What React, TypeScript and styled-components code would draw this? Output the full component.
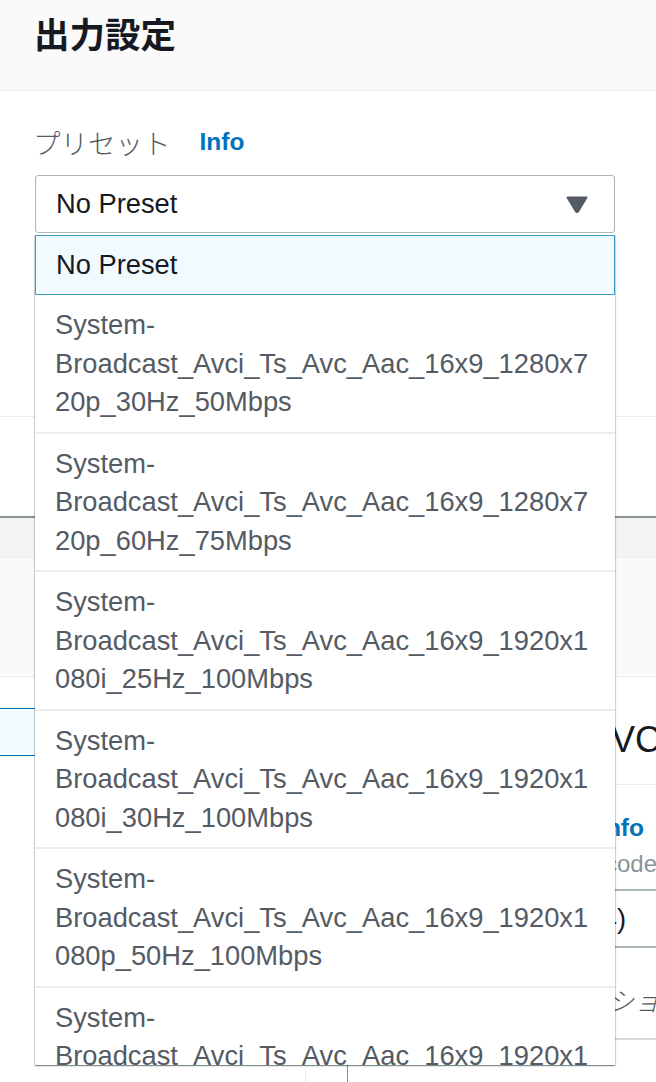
import React from "react";
import styled, { createGlobalStyle } from "styled-components";

const LATIN = `"Liberation Sans", Arial, "Noto Sans CJK JP", sans-serif`;
const CJK = `"Noto Sans CJK JP", sans-serif`;

const Global = createGlobalStyle`
  html, body { margin: 0; padding: 0; background: #fff; }
  body { font-family: ${LATIN}; }
`;

const Page = styled.div`
  position: relative;
  width: 656px;
  height: 1082px;
  overflow: hidden;
  background: #fff;
`;

const Header = styled.header`
  height: 91px;
  box-sizing: border-box;
  background: #fafafa;
  border-bottom: 1px solid #eaeded;
  padding: 12px 35px 0 34px;
`;

const Title = styled.h1`
  margin: 0;
  font: 700 35.5px/42px ${CJK};
  color: #16191f;
`;

const FormSection = styled.section`
  height: 326px;
  box-sizing: border-box;
  border-bottom: 1px solid #eaeded;
  padding: 36px 41px 0 35px;
`;

const LabelRow = styled.div`
  display: flex;
  align-items: center;
  gap: 29px;
  height: 30px;
  margin-bottom: 18px;
`;

const Label = styled.span`
  margin-left: -2px;
  font: 300 27.5px/30px ${CJK};
  color: #545b64;
`;

const InfoLink = styled.a`
  font: 700 24.5px/30px ${LATIN};
  color: #0073bb;
  text-decoration: none;
`;

const SelectWrap = styled.div`
  position: relative;
`;

const SelectBox = styled.div`
  height: 58px;
  box-sizing: border-box;
  border: 1px solid #aab7b8;
  border-radius: 3px;
  display: flex;
  align-items: center;
  justify-content: space-between;
  padding: 0 26px 0 20px;
  font: 400 27.3px/38px ${LATIN};
  color: #16191f;
`;

const Caret = styled.svg`
  width: 22px;
  height: 17px;
  display: block;
`;

const Menu = styled.ul`
  position: absolute;
  top: 60px;
  left: 0;
  right: 0;
  height: 830px;
  margin: 0;
  padding: 0;
  list-style: none;
  overflow: hidden;
  background: #fff;
  box-shadow: 0 1px 1px 0 rgba(0, 28, 36, 0.3), 1px 1px 1px 0 rgba(0, 28, 36, 0.15),
    -1px 1px 1px 0 rgba(0, 28, 36, 0.15);
  z-index: 5;
`;

const Option = styled.li<{ $selected?: boolean }>`
  box-sizing: border-box;
  padding: ${(p) => (p.$selected ? "10px 20px" : "11px 20px 10px")};
  border: ${(p) => (p.$selected ? "1px solid #3f9bcb" : "none")};
  border-bottom: ${(p) => (p.$selected ? "1px solid #3f9bcb" : "2px solid #eaeded")};
  background: ${(p) => (p.$selected ? "#f1faff" : "#fff")};
  font: 400 27.3px/${(p) => (p.$selected ? "38px" : "38.5px")} ${LATIN};
  color: ${(p) => (p.$selected ? "#16191f" : "#545b64")};
  overflow-wrap: anywhere;
`;

const Spacer = styled.div<{ $h: number }>`
  height: ${(p) => p.$h}px;
`;

const TableBar = styled.div`
  height: 42px;
  box-sizing: border-box;
  border-top: 2px solid #879596;
  border-bottom: 1px solid #eaeded;
  background: #f2f3f3;
`;

const FilterArea = styled.div`
  height: 119px;
  box-sizing: border-box;
  background: #fafafa;
  border-bottom: 1px solid #eaeded;
`;

const Columns = styled.div`
  display: grid;
  grid-template-columns: 306px 1fr;
  height: 406px;
`;

const NavCol = styled.nav`
  border-right: 1px solid #eaeded;
  padding-top: 31px;
`;

const NavItem = styled.div<{ $active?: boolean }>`
  height: 48px;
  box-sizing: border-box;
  border-top: 1px solid ${(p) => (p.$active ? "#0073bb" : "transparent")};
  border-bottom: 1px solid ${(p) => (p.$active ? "#0073bb" : "transparent")};
  background: ${(p) => (p.$active ? "#f1faff" : "transparent")};
`;

const ContentCol = styled.div`
  display: flex;
  flex-direction: column;
  align-items: stretch;
  overflow: hidden;
`;

const Heading = styled.div`
  height: 108px;
  box-sizing: border-box;
  border-bottom: 1px solid #eaeded;
  display: flex;
  align-items: center;
  justify-content: flex-end;
  padding-top: 18px;
  margin-right: -5px;
  font: 400 36px/44px ${LATIN};
  color: #16191f;
  white-space: nowrap;
`;

const FieldLabelRow = styled.div`
  display: flex;
  justify-content: flex-end;
  align-items: center;
  gap: 12px;
  margin-top: 28px;
  padding-right: 12px;
  height: 30px;
  white-space: nowrap;
`;

const FieldLabel = styled.span`
  font: 400 24px/30px ${CJK};
  color: #16191f;
`;

const Desc = styled.div`
  display: flex;
  justify-content: flex-end;
  margin-top: 4px;
  margin-right: -13px;
  font: 400 24px/34px ${LATIN};
  color: #879596;
  white-space: nowrap;
`;

const Input = styled.div`
  margin-top: 8px;
  margin-right: -10px;
  height: 59px;
  box-sizing: border-box;
  border-top: 2px solid #aab7b8;
  border-bottom: 2px solid #aab7b8;
  display: flex;
  justify-content: flex-end;
  align-items: center;
  padding-right: 40px;
  font: 400 27.3px/38px ${LATIN};
  color: #16191f;
  white-space: nowrap;
`;

const OptionalRow = styled.div`
  height: 92px;
  box-sizing: border-box;
  border-bottom: 2px solid #d5dbdb;
  display: flex;
  justify-content: flex-end;
  align-items: center;
  padding-top: 14px;
  margin-right: -30px;
  font: italic 300 26px/34px ${CJK};
  color: #545b64;
  white-space: nowrap;
`;

const SubPanel = styled.div`
  margin-top: 10px;
  margin-left: 41px;
  flex: 1;
  border-left: 1px solid #879596;
`;

const presets = [
  "System-Broadcast_Avci_Ts_Avc_Aac_16x9_1280x720p_30Hz_50Mbps",
  "System-Broadcast_Avci_Ts_Avc_Aac_16x9_1280x720p_60Hz_75Mbps",
  "System-Broadcast_Avci_Ts_Avc_Aac_16x9_1920x1080i_25Hz_100Mbps",
  "System-Broadcast_Avci_Ts_Avc_Aac_16x9_1920x1080i_30Hz_100Mbps",
  "System-Broadcast_Avci_Ts_Avc_Aac_16x9_1920x1080p_50Hz_100Mbps",
  "System-Broadcast_Avci_Ts_Avc_Aac_16x9_1920x1080p_60Hz_100Mbps",
];

export default function App() {
  return (
    <>
      <Global />
      <Page>
        <Header>
          <Title>出力設定</Title>
        </Header>
        <FormSection>
          <LabelRow>
            <Label>プリセット</Label>
            <InfoLink href="#">Info</InfoLink>
          </LabelRow>
          <SelectWrap>
            <SelectBox>
              <span>No Preset</span>
              <Caret viewBox="0 0 22 17">
                <path
                  d="M1.5 1.5 H20.5 L12.2 15.2 Q11 17 9.8 15.2 Z"
                  fill="#545b64"
                  stroke="#545b64"
                  strokeWidth="2"
                  strokeLinejoin="round"
                />
              </Caret>
            </SelectBox>
            <Menu>
              <Option $selected>No Preset</Option>
              {presets.map((p) => (
                <Option key={p}>{p}</Option>
              ))}
            </Menu>
          </SelectWrap>
        </FormSection>
        <Spacer $h={99} />
        <TableBar />
        <FilterArea />
        <Columns>
          <NavCol>
            <NavItem $active />
          </NavCol>
          <ContentCol>
            <Heading>H.264/AVC</Heading>
            <FieldLabelRow>
              <FieldLabel>コーデック</FieldLabel>
              <InfoLink href="#">Info</InfoLink>
            </FieldLabelRow>
            <Desc>Video codec</Desc>
            <Input>MPEG-4 AVC (H.264)</Input>
            <OptionalRow>オプション</OptionalRow>
            <SubPanel />
          </ContentCol>
        </Columns>
      </Page>
    </>
  );
}
